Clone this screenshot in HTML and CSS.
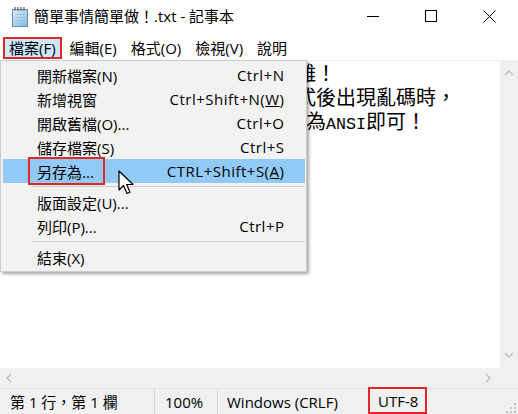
FILE: index.html
```html
<!DOCTYPE html>
<html lang="zh-Hant">
<head>
    <meta charset="UTF-8">
    <title>簡單事情簡單做！.txt - 記事本</title>
    <link rel="stylesheet" href="styles.css">
</head>
<body>
<div class="window">

    <header class="titlebar">
        <svg class="app-icon" width="18" height="22" viewBox="0 0 18 22">
            <defs>
                <linearGradient id="pad" x1="0" y1="0" x2="1" y2="1">
                    <stop offset="0" stop-color="#e3f1fb"/>
                    <stop offset="1" stop-color="#7fb9de"/>
                </linearGradient>
            </defs>
            <rect x="1.5" y="3.5" width="15" height="17" fill="url(#pad)" stroke="#5f8fb0"/>
            <path d="M4 8.5h10M4 11.5h10M4 14.5h10M4 17.5h7" stroke="#9cc3dc" stroke-width="1"/>
            <path d="M4 1v4M7 1v4M10 1v4M13 1v4" stroke="#6b7580" stroke-width="1.4"/>
        </svg>
        <span class="title">簡單事情簡單做！.txt - 記事本</span>
        <div class="controls">
            <span class="ctl">
                <svg width="12" height="12" viewBox="0 0 12 12"><path d="M0 6.5h12" stroke="#000"/></svg>
            </span>
            <span class="ctl">
                <svg width="12" height="12" viewBox="0 0 12 12"><rect x="0.5" y="0.5" width="11" height="11" fill="none" stroke="#000"/></svg>
            </span>
            <span class="ctl">
                <svg width="13" height="13" viewBox="0 0 13 13"><path d="M0.5 0.5l12 12M12.5 0.5l-12 12" stroke="#000"/></svg>
            </span>
        </div>
    </header>

    <nav class="menubar">
        <span class="menu-item active">檔案(F)</span>
        <span class="menu-item">編輯(E)</span>
        <span class="menu-item">格式(O)</span>
        <span class="menu-item">檢視(V)</span>
        <span class="menu-item">說明</span>
    </nav>

    <main class="editor">
        <div class="text">
            <div class="line"><span class="half">txt</span>檔案出現亂碼，其實一點也不難！</div>
            <div class="line">當你把<span class="half">txt</span>檔案另存並轉換編碼格式後出現亂碼時，</div>
            <div class="line">只要在另存新檔的時候，將編碼改為<span class="half">ANSI</span>即可！</div>
        </div>
        <div class="vscroll">
            <svg width="10" height="6" viewBox="0 0 10 6"><path d="M1 5l4-4 4 4" fill="none" stroke="#bdbdbd" stroke-width="1.3"/></svg>
            <svg width="10" height="6" viewBox="0 0 10 6"><path d="M1 1l4 4 4-4" fill="none" stroke="#bdbdbd" stroke-width="1.3"/></svg>
        </div>
        <div class="hscroll">
            <svg width="6" height="10" viewBox="0 0 6 10"><path d="M5 1l-4 4 4 4" fill="none" stroke="#bdbdbd" stroke-width="1.3"/></svg>
            <svg width="6" height="10" viewBox="0 0 6 10"><path d="M1 1l4 4-4 4" fill="none" stroke="#bdbdbd" stroke-width="1.3"/></svg>
        </div>
        <div class="corner"></div>
    </main>

    <footer class="statusbar">
        <span class="pane pos">第 1 行，第 1 欄</span>
        <span class="pane zoom">100%</span>
        <span class="pane eol">Windows (CRLF)</span>
        <span class="pane enc">UTF-8</span>
        <svg class="grip" width="10" height="10" viewBox="0 0 10 10">
            <rect x="8" y="0" width="2" height="2" fill="#c4c4c4"/>
            <rect x="4" y="4" width="2" height="2" fill="#c4c4c4"/>
            <rect x="8" y="4" width="2" height="2" fill="#c4c4c4"/>
            <rect x="0" y="8" width="2" height="2" fill="#c4c4c4"/>
            <rect x="4" y="8" width="2" height="2" fill="#c4c4c4"/>
            <rect x="8" y="8" width="2" height="2" fill="#c4c4c4"/>
        </svg>
    </footer>

    <div class="dropdown">
        <div class="drop-item"><span>開新檔案(N)</span><span class="key">Ctrl+N</span></div>
        <div class="drop-item"><span>新增視窗</span><span class="key">Ctrl+Shift+N(<u>W</u>)</span></div>
        <div class="drop-item"><span>開啟舊檔(O)...</span><span class="key">Ctrl+O</span></div>
        <div class="drop-item"><span>儲存檔案(S)</span><span class="key">Ctrl+S</span></div>
        <div class="drop-item hover"><span class="marked">另存為...</span><span class="key">CTRL+Shift+S(<u>A</u>)</span></div>
        <div class="sep"></div>
        <div class="drop-item"><span>版面設定(U)...</span></div>
        <div class="drop-item"><span>列印(P)...</span><span class="key">Ctrl+P</span></div>
        <div class="sep"></div>
        <div class="drop-item"><span>結束(X)</span></div>
    </div>

    <svg class="cursor" width="16" height="26" viewBox="0 0 16 26">
        <path d="M1 1v19l4.5-4.5 3.5 8 3-1.3-3.4-7.7h6.4z" fill="#fff" stroke="#000" stroke-width="1.2" stroke-linejoin="round"/>
    </svg>

</div>
</body>
</html>
```

FILE: styles.css
```css
* {
    box-sizing: border-box;
}
body {
    margin: 0;
    font-family: "Open Sans", "Noto Sans CJK TC", sans-serif;
    font-size: 15px;
    color: #000;
    background: #fff;
}
.window {
    position: relative;
    width: 518px;
    height: 414px;
    display: flex;
    flex-direction: column;
    overflow: hidden;
}

/* title bar */
.titlebar {
    height: 34px;
    display: flex;
    align-items: center;
    flex-shrink: 0;
}
.app-icon {
    margin-left: 11px;
    margin-top: -1px;
}
.title {
    margin-left: 5px;
    line-height: 20px;
    margin-top: -2px;
}
.controls {
    margin-left: auto;
    display: flex;
    align-self: stretch;
}
.ctl {
    width: 58px;
    display: flex;
    align-items: center;
    justify-content: center;
    margin-top: -2px;
}

/* menu bar */
.menubar {
    height: 27px;
    flex-shrink: 0;
    display: flex;
    align-items: flex-start;
    gap: 2px;
    padding: 3px 0 0 3px;
    border-bottom: 1px solid #f0f0f0;
}
.menu-item {
    height: 22px;
    line-height: 18px;
    padding: 0 4px;
    border: 2px solid transparent;
    white-space: nowrap;
}
.menu-item.active {
    background: #cce8ff;
    border-color: #e3262a;
}

/* editor */
.editor {
    flex: 1;
    display: grid;
    grid-template-columns: 1fr 18px;
    grid-template-rows: 1fr 20px;
    min-height: 0;
}
.text {
    padding: 2px 0 0 6px;
    font-family: "Noto Sans CJK TC", sans-serif;
    font-size: 20px;
    line-height: 20px;
    white-space: nowrap;
    overflow: hidden;
}
.half {
    font-family: "Liberation Mono", monospace;
    font-size: 16.67px;
}
.vscroll {
    background: #f0f0f0;
    display: flex;
    flex-direction: column;
    justify-content: space-between;
    align-items: center;
    padding: 9px 0 10px;
}
.hscroll {
    background: #f0f0f0;
    display: flex;
    justify-content: space-between;
    align-items: center;
    padding: 0 9px 0 6px;
}
.corner {
    background: #f0f0f0;
}

/* status bar */
.statusbar {
    height: 26px;
    flex-shrink: 0;
    display: flex;
    align-items: stretch;
    background: #f0f0f0;
    border-top: 1px solid #e2e2e2;
    line-height: 22px;
    white-space: nowrap;
}
.pane {
    display: flex;
    align-items: center;
    padding-left: 10px;
}
.pos {
    width: 155px;
    border-right: 1px solid #d7d7d7;
}
.zoom {
    width: 63px;
    border-right: 1px solid #d7d7d7;
}
.eol {
    width: 150px;
    padding-left: 9px;
}
.enc {
    border: 2px solid #e3262a;
    padding: 0 7px 0 8px;
    margin-top: -2px;
}
.grip {
    align-self: flex-end;
    margin: 0 2px 1px auto;
}

/* file menu */
.dropdown {
    position: absolute;
    left: 0;
    top: 60px;
    width: 307px;
    padding: 2px 1px 2px 2px;
    background: #f2f2f2;
    border: 1px solid #cccccc;
    box-shadow: 2px 2px 3px rgba(0, 0, 0, 0.35);
}
.drop-item {
    height: 24px;
    display: flex;
    align-items: center;
    justify-content: space-between;
    padding: 0 21px 0 34px;
    white-space: nowrap;
}
.drop-item.hover {
    background: #91c9f7;
}
.key {
    letter-spacing: 0.5px;
    margin-right: -0.5px;
}
.marked {
    height: 28px;
    display: flex;
    align-items: center;
    margin-left: -9px;
    padding: 0 9px 0 7px;
    border: 2px solid #e3262a;
}
.sep {
    height: 7px;
    margin-left: 29px;
    display: flex;
    align-items: center;
}
.sep::after {
    content: "";
    flex: 1;
    height: 1px;
    background: #cccccc;
}
.cursor {
    position: absolute;
    left: 118px;
    top: 170px;
}
```
